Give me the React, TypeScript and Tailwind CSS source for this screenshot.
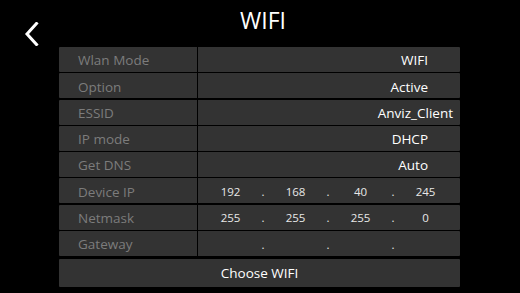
import React from "react";

const rows: { label: string; value?: string; pr?: string; ip?: string[] }[] = [
  { label: "Wlan Mode", value: "WIFI" },
  { label: "Option", value: "Active" },
  { label: "ESSID", value: "Anviz_Client", pr: "pr-[7px]" },
  { label: "IP mode", value: "DHCP" },
  { label: "Get DNS", value: "Auto" },
  { label: "Device IP", ip: ["192", "168", "40", "245"] },
  { label: "Netmask", ip: ["255", "255", "255", "0"] },
  { label: "Gateway", ip: ["", "", "", ""] },
];

function Ip({ parts }: { parts: string[] }) {
  return (
    <div className="flex h-full items-center pt-[2px] pl-[8px] text-[11.5px] text-[#e8e8e8]">
      {parts.map((p, i) => (
        <React.Fragment key={i}>
          <span className="w-[49px] text-center">{p}</span>
          {i < 3 && <span className="w-[16px] text-center">.</span>}
        </React.Fragment>
      ))}
    </div>
  );
}

export default function App() {
  return (
    <div
      className="w-[520px] h-[293px] bg-black overflow-hidden flex flex-col"
      style={{ fontFamily: '"Open Sans", "Noto Sans", sans-serif' }}
    >
      <div className="relative h-[47px] flex items-start justify-center">
        <svg
          className="absolute left-[24px] top-[22px]"
          width="15"
          height="24"
          viewBox="0 0 15 24"
          fill="none"
        >
          <path d="M12.5 1.5 L3 12 L12.5 22.5" stroke="white" strokeWidth="3" strokeLinecap="square" />
        </svg>
        <div className="mt-[5px] pl-[6px] text-[23px] leading-[30px] text-white">WIFI</div>
      </div>
      <div className="ml-[59px] w-[401px] flex flex-col gap-[1.25px]">
        {rows.map((r) => (
          <div key={r.label} className="flex h-[25px] bg-[#333333] rounded-[1px]">
            <div className="w-[138px] shrink-0 flex items-center pt-[2px] pl-[19px] text-[13.5px] text-[#7c7c7c]">
              {r.label}
            </div>
            <div className="flex-1 border-l border-black">
              {r.ip ? (
                <Ip parts={r.ip} />
              ) : (
                <div className={`flex h-full items-center justify-end pt-[2px] ${r.pr ?? "pr-[32px]"} text-[13.5px] text-white`}>
                  {r.value}
                </div>
              )}
            </div>
          </div>
        ))}
        <div className="mt-[1.5px] h-[28px] bg-[#333333] rounded-[1px] flex items-center justify-center pt-[2px] text-[13.5px] text-white">
          Choose WIFI
        </div>
      </div>
    </div>
  );
}
